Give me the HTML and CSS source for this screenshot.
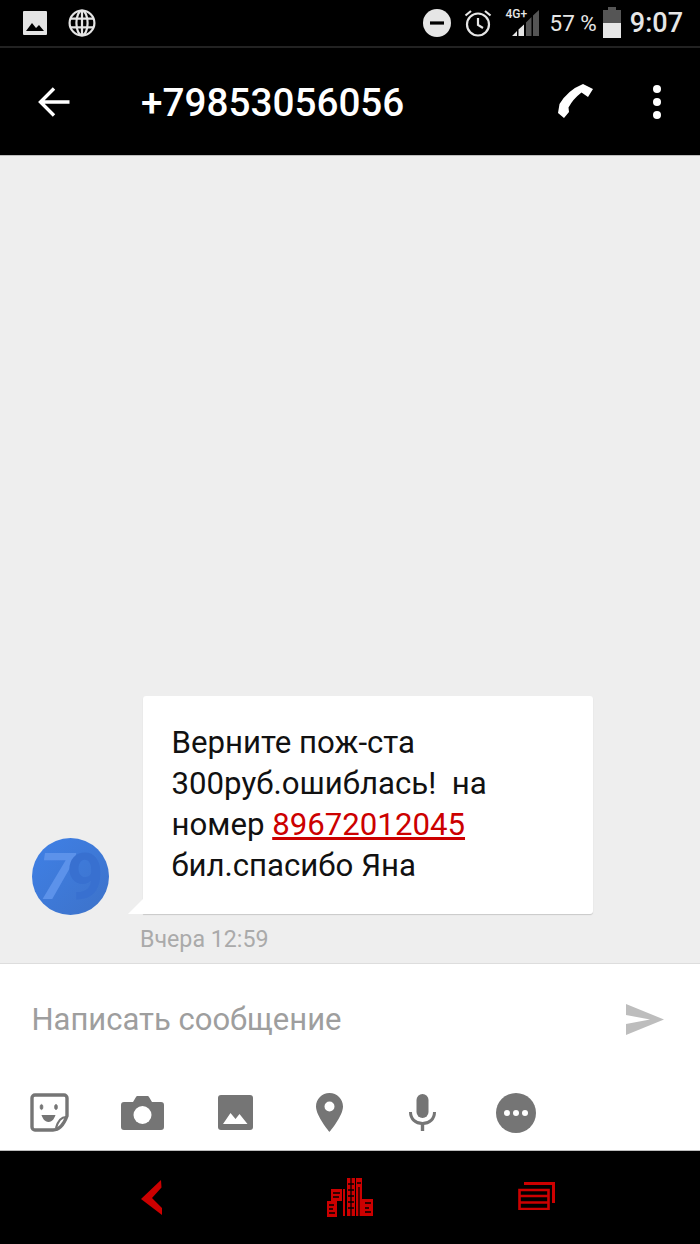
FILE: index.html
```html
<!DOCTYPE html>
<html lang="ru">
  <head>
    <meta charset="UTF-8" />
    <title>+79853056056</title>
    <link rel="stylesheet" href="styles.css">
  </head>
  <body>
    <div class="app">
      <div class="status-bar">
        <div class="status-left">
          <svg class="st-image" width="24" height="24" viewBox="0 0 24 24">
            <path fill="#e4e4e4" d="M1 0h22a1 1 0 0 1 1 1v22a1 1 0 0 1-1 1H1a1 1 0 0 1-1-1V1a1 1 0 0 1 1-1z"/>
            <path fill="#000" d="M3 20l6-8 4 5 3-3 5 6z"/>
          </svg>
          <svg class="st-globe" width="28" height="28" viewBox="0 0 28 28" fill="none" stroke="#e4e4e4" stroke-width="2.2">
            <circle cx="14" cy="14" r="12.4"/>
            <ellipse cx="14" cy="14" rx="5.6" ry="12.4"/>
            <path d="M2 9.6h24M2 18.4h24M14 1.6v24.8"/>
          </svg>
        </div>
        <div class="status-right">
          <svg class="st-dnd" width="28" height="28" viewBox="0 0 28 28">
            <circle cx="14" cy="14" r="14" fill="#e6e6e6"/>
            <rect x="7" y="12.4" width="14" height="3.2" fill="#000"/>
          </svg>
          <svg class="st-alarm" width="28" height="28" viewBox="0 0 28 28" fill="none" stroke="#e6e6e6" stroke-width="2.2">
            <circle cx="14" cy="15.5" r="11"/>
            <path d="M14 9v7l5 3M1.5 6.5L7 2M26.500 6.500L21 2"/>
          </svg>
          <div class="st-signal">
            <span class="st-net">4G+</span>
            <svg width="28" height="27" viewBox="0 0 28 27">
              <path fill="#e6e6e6" d="M0 26l5-5v5zM6.500 19.500L12 14.500V26H6.500z"/>
              <path fill="#555" d="M14 12.500L19.500 7V26H14zM21 5.500L27 0v26h-6z"/>
            </svg>
          </div>
          <span class="st-battery-text">57 %</span>
          <div class="st-battery"><div class="st-battery-cap"></div><div class="st-battery-level"></div></div>
          <span class="st-time">9:07</span>
        </div>
      </div>

      <header class="top-bar">
        <svg class="back-arrow" width="32" height="30" viewBox="0 0 32 30" fill="none" stroke="#fff" stroke-width="3.400">
          <path d="M16 1.500L2.500 15 16 28.500M3 15h28.500"/>
        </svg>
        <h1>+79853056056</h1>
        <svg class="call-icon" width="37" height="36" viewBox="557 83 37 36">
          <path fill="#fff" d="M583 84L593 89 588 97 581.500 92.500Q573 99 568.500 107.500L569 112 564 118 558 113 559.500 104Q568 90 583 84z"/>
        </svg>
        <div class="menu-dots"><span></span><span></span><span></span></div>
      </header>

      <main class="thread">
        <div class="message">
          <svg class="avatar" width="77" height="77" viewBox="0 0 77 77">
            <defs>
              <linearGradient id="avatarBg" x1="0" y1="0" x2="1" y2="1">
                <stop offset="0" stop-color="#3f80e6"/>
                <stop offset="1" stop-color="#3d72c9"/>
              </linearGradient>
            </defs>
            <circle cx="38.500" cy="38.500" r="38.500" fill="url(#avatarBg)"/>
            <text class="avatar-digits" x="7" y="61"><tspan class="avatar-seven">7</tspan><tspan class="avatar-nine">9</tspan></text>
          </svg>
          <div class="bubble">
            Верните пож-ста<br>
            300руб.ошиблась!&nbsp; на<br>
            номер <a href="#">89672012045</a><br>
            бил.спасибо Яна
          </div>
        </div>
        <div class="msg-time">Вчера 12:59</div>
      </main>

      <section class="composer">
        <div class="input-row">
          <span class="placeholder">Написать сообщение</span>
          <svg class="send-icon" width="38" height="31" viewBox="0 0 38 31">
            <path fill="#bdbdbd" d="M0 0l38 15.500L0 31v-11l24-4.500L0 11z"/>
          </svg>
        </div>
        <div class="tools">
          <svg width="39" height="39" viewBox="0 0 39 39" fill="none" stroke="#757575" stroke-width="3.400">
            <path d="M5 2h29a3 3 0 0 1 3 3v18c-3 8-8 14-14 14H5a3 3 0 0 1-3-3V5a3 3 0 0 1 3-3z"/>
            <path d="M36 24c-5 0-8 4-10 11" stroke-width="2.200"/>
            <ellipse cx="11.500" cy="14" rx="1.400" ry="2.600" fill="#757575" stroke-width="0.800"/>
            <ellipse cx="26" cy="14" rx="1.400" ry="2.600" fill="#757575" stroke-width="0.800"/>
            <path d="M11.500 22h14c-1 3-3 7-7 7s-6-4-7-7z" fill="#757575" stroke="none"/>
          </svg>
          <svg width="43" height="34" viewBox="0 0 43 34">
            <path fill="#757575" d="M3 6h9l3-5a2 2 0 0 1 2-1h9a2 2 0 0 1 2 1l3 5h9a3 3 0 0 1 3 3v22a3 3 0 0 1-3 3H3a3 3 0 0 1-3-3V9a3 3 0 0 1 3-3z"/>
            <circle cx="21.500" cy="19" r="9" fill="#fff"/>
          </svg>
          <svg width="35" height="35" viewBox="0 0 35 35">
            <path fill="#757575" d="M3 0h29a3 3 0 0 1 3 3v29a3 3 0 0 1-3 3H3a3 3 0 0 1-3-3V3a3 3 0 0 1 3-3z"/>
            <path fill="#fff" d="M5 29l7.500-11 5 6 4-5 8 10z"/>
          </svg>
          <svg width="27" height="39" viewBox="0 0 27 39">
            <path fill="#757575" fill-rule="evenodd" d="M13.500 0C6 0 0 6 0 13.500 0 23 13.500 39 13.500 39S27 23 27 13.500C27 6 21 0 13.500 0zm0 8.500a5 5 0 1 1 0 10 5 5 0 0 1 0-10z"/>
          </svg>
          <svg width="27" height="37" viewBox="0 0 27 37" fill="none">
            <rect x="7.500" y="0" width="12" height="24" rx="6" fill="#757575"/>
            <path d="M1.500 18c0 7 5 11.500 12 11.500s12-4.500 12-11.500" stroke="#757575" stroke-width="3"/>
            <path d="M13.500 29v8" stroke="#757575" stroke-width="3.400"/>
          </svg>
          <svg width="40" height="40" viewBox="0 0 40 40">
            <circle cx="20" cy="20" r="20" fill="#757575"/>
            <circle cx="11" cy="20" r="3" fill="#fff"/>
            <circle cx="20" cy="20" r="3" fill="#fff"/>
            <circle cx="29" cy="20" r="3" fill="#fff"/>
          </svg>
        </div>
      </section>

      <nav class="nav-bar">
        <svg class="nav-back" width="23" height="36" viewBox="0 0 23 36">
          <path fill="#cc0000" d="M21 0l.5 7.500L12 18l10 10v7L1 19z"/>
        </svg>
        <svg class="nav-apps" width="47" height="39" viewBox="0 0 47 39">
          <path fill="#cc0000" d="M0 23h10v16H0zM4 11h11v12H4zM16 11h2v27h-2zM20 0h8v38h-8zM29 0h6v38h-6zM35 21h11v17H35z"/>
          <path stroke="#000" stroke-width="1.300" fill="none" d="M2 27h5M2 31h4M2 35h6M6 15h7M6 19h6M21 6h6M21 12h6M21 18h6M21 24h6M21 30h6M30 5h4M38 25h6M38 30h4M38 34h6M11 23v16M24 0v38M32 9v29"/>
        </svg>
        <svg class="nav-recent" width="37" height="28" viewBox="0 0 37 28" fill="none" stroke="#cc0000">
          <path stroke-width="3" d="M6 1.500h29.500V21"/>
          <path stroke-width="2.600" d="M1.500 8h29v19h-29zM1.500 14h29M1.500 20.500h29"/>
        </svg>
      </nav>
    </div>
  </body>
</html>
```

FILE: styles.css
```css
* {
  box-sizing: border-box;
}

body {
  margin: 0;
  font-family: "Roboto", "Noto Sans", sans-serif;
}

.app {
  width: 700px;
  height: 1244px;
  display: flex;
  flex-direction: column;
  background: #eeeeee;
  overflow: hidden;
}

/* status bar */
.status-bar {
  height: 48px;
  flex: none;
  background: #000;
  border-bottom: 2px solid #222;
  display: flex;
  justify-content: space-between;
  align-items: center;
  padding: 0 17px 0 23px;
  color: #e6e6e6;
}

.status-left {
  display: flex;
  align-items: center;
  gap: 21px;
}

.status-right {
  display: flex;
  align-items: center;
}

.st-alarm {
  margin-left: 13px;
}

.st-signal {
  position: relative;
  width: 28px;
  height: 27px;
  margin-left: 20px;
}

.st-signal svg {
  display: block;
}

.st-net {
  position: absolute;
  left: -7px;
  top: -2px;
  font-size: 12px;
  font-weight: 500;
  line-height: 13px;
}

.st-battery-text {
  margin-left: 9px;
  font-size: 22.5px;
}

.st-battery {
  width: 18px;
  height: 28px;
  margin-left: 6px;
  display: flex;
  flex-direction: column;
  background: #555;
  position: relative;
  margin-top: 2px;
}

.st-battery-cap {
  position: absolute;
  left: 5px;
  top: -3px;
  width: 8px;
  height: 3px;
  background: #555;
}

.st-battery-level {
  margin-top: auto;
  height: 15px;
  background: #e6e6e6;
}

.st-time {
  margin-left: 9px;
  font-size: 27px;
  font-weight: 500;
}

/* top bar */
.top-bar {
  height: 108px;
  flex: none;
  background: #000;
  border-bottom: 1px solid #bdbdbd;
  display: flex;
  align-items: center;
  color: #fff;
}

.back-arrow {
  margin-left: 38px;
  flex: none;
}

.top-bar h1 {
  margin: 2px 0 0 71px;
  font-size: 38.7px;
  font-weight: 500;
  flex: 1;
}

.call-icon {
  flex: none;
  margin-bottom: 1px;
}

.menu-dots {
  width: 8px;
  margin: 0 39px 0 59px;
  display: flex;
  flex-direction: column;
  gap: 5px;
}

.menu-dots span {
  width: 8px;
  height: 8px;
  border-radius: 50%;
  background: #fff;
}

/* messages */
.thread {
  flex: 1;
  display: flex;
  flex-direction: column;
  justify-content: flex-end;
}

.message {
  display: flex;
  align-items: flex-end;
  padding-left: 32px;
  gap: 34px;
}

.avatar {
  flex: none;
  margin-bottom: -1px;
}

.avatar-digits {
  font-family: "Roboto", sans-serif;
  font-size: 64px;
  font-weight: 700;
  letter-spacing: -8px;
}

.avatar-seven {
  font-style: italic;
  fill: #5c92ea;
}

.avatar-nine {
  fill: #3870d0;
}

.bubble {
  position: relative;
  width: 450px;
  height: 218px;
  padding: 26px 20px 0 28.500px;
  background: #fff;
  border-radius: 3px 3px 3px 0;
  box-shadow: 0 1px 1px #c8c8c8;
  font-size: 31.2px;
  line-height: 41px;
  color: #111;
}

.bubble::before {
  content: "";
  position: absolute;
  left: -15px;
  bottom: 0;
  border-bottom: 15px solid #fff;
  border-left: 15px solid transparent;
}

.bubble a {
  color: #cc0000;
}

.msg-time {
  height: 49px;
  padding: 13px 0 0 140px;
  font-size: 23.2px;
  line-height: 25px;
  color: #aaaaaa;
}

/* composer */
.composer {
  height: 187px;
  flex: none;
  background: #fff;
  border-top: 1px solid #dddddd;
}

.input-row {
  height: 111px;
  display: flex;
  align-items: center;
  justify-content: space-between;
  padding: 0 36px 0 31.500px;
}

.placeholder {
  font-size: 31px;
  color: #9e9e9e;
}

.tools {
  display: grid;
  grid-template-columns: repeat(6, 93.4px);
  padding: 5px 0 0 2.500px;
  justify-items: center;
  align-items: center;
  height: 70px;
}

/* bottom nav */
.nav-bar {
  height: 94px;
  flex: none;
  background: #000;
  border-top: 1px solid #bdbdbd;
  display: flex;
  align-items: center;
  padding: 0 0 0 140px;
}

.nav-apps {
  margin-left: 164px;
}

.nav-recent {
  margin-left: 144px;
  margin-bottom: 4px;
}
```
